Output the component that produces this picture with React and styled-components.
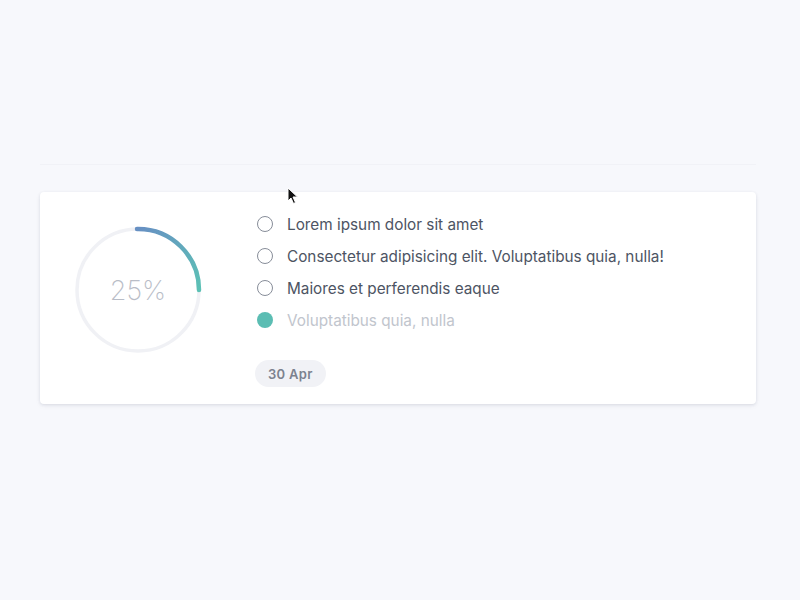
import React from "react";
import styled, { createGlobalStyle } from "styled-components";

const Global = createGlobalStyle`
  html, body { margin: 0; padding: 0; background: #f7f8fc; }
  body { font-family: Inter, "Noto Sans", "Liberation Sans", sans-serif; -webkit-font-smoothing: antialiased; }
`;

const Page = styled.div`
  position: relative;
  width: 800px;
  height: 600px;
  box-sizing: border-box;
  padding: 164px 44px 0 40px;
`;

const Rule = styled.div`
  height: 1px;
  background: #f1f2f7;
  margin-bottom: 27px;
`;

const Card = styled.div`
  display: flex;
  align-items: flex-start;
  gap: 55px;
  background: #ffffff;
  border-radius: 4px;
  box-shadow: 0 1px 3px rgba(40, 50, 80, 0.12), 0 2px 6px rgba(40, 50, 80, 0.04);
  padding: 16px 36px 17px 34px;
`;

const Ring = styled.svg`
  flex: none;
  margin-top: 18px;
  display: block;
`;

const RingLabel = styled.text`
  font-family: Inter, "Noto Sans", sans-serif;
  font-weight: 200;
  font-size: 27px;
  fill: #b9bdc7;
`;

const Content = styled.div`
  display: flex;
  flex-direction: column;
  align-items: flex-start;
`;

const List = styled.ul`
  list-style: none;
  margin: 0;
  padding: 0;
`;

const Item = styled.li`
  display: flex;
  align-items: center;
  gap: 14px;
  height: 32px;
  font-size: 15.3px;
  color: ${(p) => (p.$done ? "#c1c5cd" : "#4d5463")};
`;

const Check = styled.span`
  flex: none;
  width: 16px;
  height: 16px;
  box-sizing: border-box;
  border-radius: 50%;
  border: ${(p) => (p.$done ? "none" : "1.6px solid #878d99")};
  background: ${(p) => (p.$done ? "#5bbdb3" : "transparent")};
`;

const Badge = styled.span`
  margin: 24px 0 0 -2px;
  height: 27px;
  padding: 0 13px;
  border-radius: 14px;
  background: #f1f2f6;
  color: #7c828f;
  font-size: 13px;
  font-weight: 600;
  line-height: 28px;
  letter-spacing: 0.3px;
`;

const Cursor = styled.svg`
  position: absolute;
  left: 287px;
  top: 187px;
`;

const items = [
  { text: "Lorem ipsum dolor sit amet" },
  { text: "Consectetur adipisicing elit. Voluptatibus quia, nulla!" },
  { text: "Maiores et perferendis eaque" },
  { text: "Voluptatibus quia, nulla", done: true },
];

export default function App() {
  return (
    <>
      <Global />
      <Page>
        <Rule />
        <Card>
          <Ring width="128" height="128" viewBox="0 0 128 128">
            <defs>
              <linearGradient id="arc" gradientUnits="userSpaceOnUse" x1="64" y1="3" x2="125" y2="64">
                <stop offset="0" stopColor="#6790c3" />
                <stop offset="1" stopColor="#5cc1b5" />
              </linearGradient>
            </defs>
            <circle cx="64" cy="64" r="61" fill="none" stroke="#f0f1f5" strokeWidth="3.5" />
            <path d="M 63 3 A 61 61 0 0 1 125 64" fill="none" stroke="url(#arc)" strokeWidth="4.5" strokeLinecap="round" />
            <RingLabel x="64" y="64" textAnchor="middle" dominantBaseline="central">25%</RingLabel>
          </Ring>
          <Content>
            <List>
              {items.map((it) => (
                <Item key={it.text} $done={it.done}>
                  <Check $done={it.done} />
                  {it.text}
                </Item>
              ))}
            </List>
            <Badge>30 Apr</Badge>
          </Content>
        </Card>
        <Cursor width="12" height="18" viewBox="0 0 12 18">
          <path d="M1 1 L1 14 L4 11 L6.5 16.5 L8.5 15.5 L6 10 L10.5 10 Z" fill="#111" stroke="#fff" strokeWidth="1" />
        </Cursor>
      </Page>
    </>
  );
}
